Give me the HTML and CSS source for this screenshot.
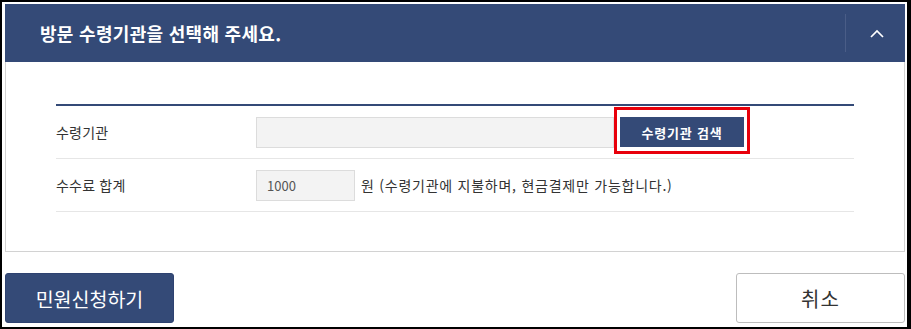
FILE: index.html
```html
<!DOCTYPE html>
<html lang="ko">
<head>
<meta charset="utf-8">
<title>방문 수령기관 선택</title>
<link rel="stylesheet" href="styles.css">
</head>
<body>
<div class="frame">
  <section class="panel">
    <header class="panel-head">
      <h2 class="panel-title">방문 수령기관을 선택해 주세요.</h2>
      <button class="toggle" type="button" aria-label="접기">
        <svg width="14" height="9" viewBox="0 0 14 9"><polyline points="1,8 7,2 13,8" fill="none" stroke="#ffffff" stroke-width="1.7"/></svg>
      </button>
    </header>
    <div class="panel-body">
      <div class="form">
        <div class="row">
          <div class="label">수령기관</div>
          <div class="field">
            <input class="input input-wide" type="text" readonly>
            <span class="btn-wrap">
              <button class="search" type="button">수령기관 검색</button>
              <span class="highlight"></span>
            </span>
          </div>
        </div>
        <div class="row">
          <div class="label">수수료 합계</div>
          <div class="field">
            <input class="input input-short" type="text" value="1000" readonly>
            <span class="note">원 (수령기관에 지불하며, 현금결제만 가능합니다.)</span>
          </div>
        </div>
      </div>
    </div>
  </section>
  <div class="actions">
    <button class="btn btn-primary" type="button">민원신청하기</button>
    <button class="btn btn-secondary" type="button">취소</button>
  </div>
</div>
</body>
</html>
```
FILE: styles.css
```css
html, body {
  margin: 0;
  padding: 0;
  background: #ffffff;
}
body {
  font-family: "Noto Sans CJK KR", "Noto Sans", sans-serif;
  color: #333333;
}
.frame {
  box-sizing: border-box;
  width: 911px;
  height: 329px;
  border-style: solid;
  border-color: #000000;
  border-width: 2px 4px 2px 2px;
  padding: 2px 2px 0 3px;
  display: flex;
  flex-direction: column;
}
.panel {
  display: flex;
  flex-direction: column;
}
.panel-head {
  height: 58px;
  background: #344a77;
  display: flex;
  align-items: center;
  justify-content: space-between;
  padding-left: 35px;
}
.panel-title {
  margin: 0;
  color: #ffffff;
  font-size: 18px;
  font-weight: 700;
  letter-spacing: 0.3px;
  line-height: 1;
}
.toggle {
  width: 60px;
  height: 38px;
  padding: 0;
  margin: 0;
  background: transparent;
  border: none;
  border-left: 1px solid #4a5d87;
  display: flex;
  align-items: center;
  justify-content: center;
}
.toggle svg {
  display: block;
  margin-left: 2px;
}
.panel-body {
  border: 1px solid #d2d2d2;
  border-top: none;
  padding: 42px 50px 39px 50px;
}
.form {
  border-top: 2px solid #344a77;
}
.row {
  display: flex;
  align-items: center;
  height: 52px;
  border-bottom: 1px solid #e6e6e6;
}
.label {
  width: 200px;
  flex: none;
  font-size: 14px;
  letter-spacing: 0.2px;
  color: #333333;
}
.field {
  display: flex;
  align-items: center;
}
.input {
  box-sizing: border-box;
  height: 31px;
  margin: 0;
  border: 1px solid #dcdcdc;
  background: #f3f3f3;
  font-family: "Noto Sans CJK KR", "Noto Sans", sans-serif;
  font-size: 13px;
  color: #555555;
  padding: 0 10px;
  outline: none;
}
.input-wide {
  width: 358px;
}
.input-short {
  width: 99px;
}
.btn-wrap {
  position: relative;
  margin-left: 6px;
  display: flex;
}
.search {
  width: 124px;
  height: 30px;
  margin: 0;
  padding: 0;
  border: none;
  background: #344a77;
  color: #ffffff;
  font-family: "Noto Sans CJK KR", "Noto Sans", sans-serif;
  font-size: 13px;
  font-weight: 700;
  letter-spacing: 0.8px;
}
.highlight {
  position: absolute;
  left: -6px;
  right: -6px;
  top: -10px;
  bottom: -7px;
  border: 3px solid #e8000b;
  pointer-events: none;
}
.note {
  margin-left: 6px;
  font-size: 14px;
  letter-spacing: 0.75px;
  color: #333333;
}
.actions {
  margin-top: 21px;
  display: flex;
  justify-content: space-between;
}
.btn {
  box-sizing: border-box;
  width: 169px;
  height: 50px;
  margin: 0;
  border-radius: 3px;
  font-family: "Noto Sans CJK KR", "Noto Sans", sans-serif;
  font-size: 19.5px;
}
.btn-primary {
  background: #344a77;
  border: 1px solid #2e4270;
  color: #ffffff;
}
.btn-secondary {
  background: #ffffff;
  border: 1px solid #bdbdbd;
  color: #333333;
  font-size: 20px;
  letter-spacing: 1px;
}
```
